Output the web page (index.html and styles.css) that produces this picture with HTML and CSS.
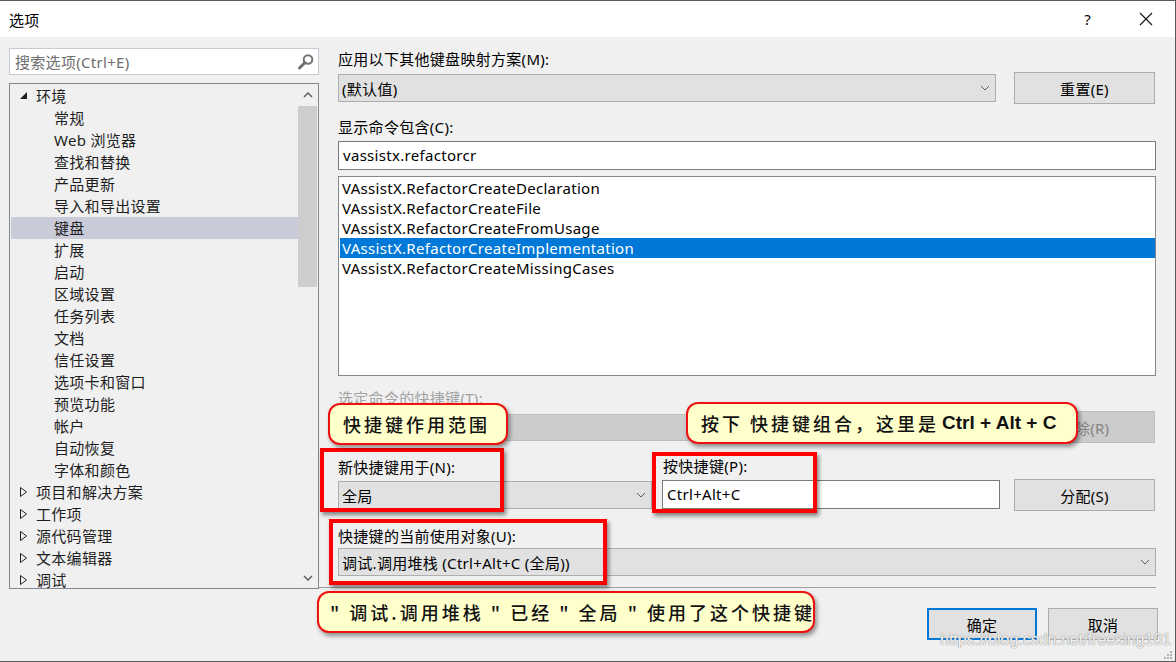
FILE: index.html
```html
<!DOCTYPE html>
<html>
  <head>
    <meta charset="utf-8">
    <title>选项</title>
    <link rel="stylesheet" href="styles.css">
  </head>
  <body>
    <div class="window">
      <!-- Titelleiste -->
      <div class="titlebar">
        <span class="title">选项</span>
        <span class="help">?</span>
        <svg class="close" width="14" height="14" viewBox="0 0 14 14">
          <path d="M1 1 L13 13 M13 1 L1 13" stroke="#111" stroke-width="1.1" fill="none"/>
        </svg>
      </div>

      <div class="main">
        <!-- linke Spalte: Suche + Baum -->
        <div class="left">
          <div class="search">
            <span class="placeholder">搜索选项(Ctrl+E)</span>
            <svg class="search-icon" width="18" height="18" viewBox="0 0 18 18">
              <circle cx="11" cy="6.5" r="4.3" stroke="#717171" stroke-width="2" fill="none"/>
              <path d="M8 9.5 L2.5 15" stroke="#717171" stroke-width="3" stroke-linecap="round"/>
            </svg>
          </div>

          <div class="tree">
            <ul class="tree-list">
              <li class="tree-item">
                <span class="twisty"><svg width="10" height="10" viewBox="0 0 10 10"><path d="M8 1 L8 8 L1 8 Z" fill="#1e1e1e"/></svg></span>环境
              </li>
              <li class="tree-item child">常规</li>
              <li class="tree-item child">Web 浏览器</li>
              <li class="tree-item child">查找和替换</li>
              <li class="tree-item child">产品更新</li>
              <li class="tree-item child">导入和导出设置</li>
              <li class="tree-item child selected">键盘</li>
              <li class="tree-item child">扩展</li>
              <li class="tree-item child">启动</li>
              <li class="tree-item child">区域设置</li>
              <li class="tree-item child">任务列表</li>
              <li class="tree-item child">文档</li>
              <li class="tree-item child">信任设置</li>
              <li class="tree-item child">选项卡和窗口</li>
              <li class="tree-item child">预览功能</li>
              <li class="tree-item child">帐户</li>
              <li class="tree-item child">自动恢复</li>
              <li class="tree-item child">字体和颜色</li>
              <li class="tree-item"><span class="twisty"><svg width="10" height="12" viewBox="0 0 10 12"><path d="M1.5 1.5 L7.5 6 L1.5 10.5 Z" stroke="#1e1e1e" fill="none"/></svg></span>项目和解决方案</li>
              <li class="tree-item"><span class="twisty"><svg width="10" height="12" viewBox="0 0 10 12"><path d="M1.5 1.5 L7.5 6 L1.5 10.5 Z" stroke="#1e1e1e" fill="none"/></svg></span>工作项</li>
              <li class="tree-item"><span class="twisty"><svg width="10" height="12" viewBox="0 0 10 12"><path d="M1.5 1.5 L7.5 6 L1.5 10.5 Z" stroke="#1e1e1e" fill="none"/></svg></span>源代码管理</li>
              <li class="tree-item"><span class="twisty"><svg width="10" height="12" viewBox="0 0 10 12"><path d="M1.5 1.5 L7.5 6 L1.5 10.5 Z" stroke="#1e1e1e" fill="none"/></svg></span>文本编辑器</li>
              <li class="tree-item"><span class="twisty"><svg width="10" height="12" viewBox="0 0 10 12"><path d="M1.5 1.5 L7.5 6 L1.5 10.5 Z" stroke="#1e1e1e" fill="none"/></svg></span>调试</li>
            </ul>
            <div class="vscroll">
              <div class="sb-btn"><svg width="10" height="6" viewBox="0 0 10 6"><path d="M1 5 L5 1 L9 5" stroke="#606060" stroke-width="1.5" fill="none"/></svg></div>
              <div class="sb-thumb"></div>
              <div class="sb-space"></div>
              <div class="sb-btn"><svg width="10" height="6" viewBox="0 0 10 6"><path d="M1 1 L5 5 L9 1" stroke="#606060" stroke-width="1.5" fill="none"/></svg></div>
            </div>
          </div>
        </div>

        <!-- rechte Spalte -->
        <div class="right">
          <div class="label">应用以下其他键盘映射方案(M):</div>
          <div class="row row-top">
            <div class="combo combo-wide">
              <span>(默认值)</span>
              <svg width="10" height="6" viewBox="0 0 10 6"><path d="M1 1 L5 5 L9 1" stroke="#606060" fill="none"/></svg>
            </div>
            <div class="btn">重置(E)</div>
          </div>

          <div class="label gap13">显示命令包含(C):</div>
          <div class="textbox tb-filter">vassistx.refactorcr</div>

          <ul class="cmdlist">
            <li>VAssistX.RefactorCreateDeclaration</li>
            <li>VAssistX.RefactorCreateFile</li>
            <li>VAssistX.RefactorCreateFromUsage</li>
            <li class="selected">VAssistX.RefactorCreateImplementation</li>
            <li>VAssistX.RefactorCreateMissingCases</li>
          </ul>

          <div class="label disabled gap12">选定命令的快捷键(T):</div>
          <div class="row row-disabled">
            <div class="combo combo-wide combo-off"></div>
            <div class="btn btn-off">删除(R)</div>
          </div>

          <div class="row row-new">
            <div class="field field-scope">
              <div class="label">新快捷键用于(N):</div>
              <div class="combo">
                <span>全局</span>
                <svg width="10" height="6" viewBox="0 0 10 6"><path d="M1 1 L5 5 L9 1" stroke="#606060" fill="none"/></svg>
              </div>
            </div>
            <div class="field field-keys">
              <div class="label">按快捷键(P):</div>
              <div class="textbox">Ctrl+Alt+C</div>
            </div>
            <div class="btn btn-assign">分配(S)</div>
          </div>

          <div class="label gap17">快捷键的当前使用对象(U):</div>
          <div class="combo combo-used">
            <span>调试.调用堆栈 (Ctrl+Alt+C (全局))</span>
            <svg width="10" height="6" viewBox="0 0 10 6"><path d="M1 1 L5 5 L9 1" stroke="#606060" fill="none"/></svg>
          </div>

          <div class="separator"></div>

          <div class="row row-ok">
            <div class="btn btn-small btn-default">确定</div>
            <div class="btn btn-small">取消</div>
          </div>
        </div>
      </div>

      <!-- Markierungen aus dem Screenshot -->
      <div class="mark mark-scope"></div>
      <div class="mark mark-keys"></div>
      <div class="mark mark-used"></div>

      <div class="callout callout-scope">快捷键作用范围</div>
      <div class="callout callout-keys">按下 快捷键组合，这里是 <b>Ctrl + Alt + C</b></div>
      <div class="callout callout-used">" 调试.调用堆栈 " 已经 " 全局 " 使用了这个快捷键</div>

      <div class="watermark">https://blog.csdn.net/freeking101</div>
      <svg class="grip" width="10" height="10" viewBox="0 0 10 10">
        <rect x="7" y="1" width="2" height="2" fill="#b5b5b5"/>
        <rect x="4" y="4" width="2" height="2" fill="#b5b5b5"/>
        <rect x="7" y="4" width="2" height="2" fill="#b5b5b5"/>
        <rect x="1" y="7" width="2" height="2" fill="#b5b5b5"/>
        <rect x="4" y="7" width="2" height="2" fill="#b5b5b5"/>
        <rect x="7" y="7" width="2" height="2" fill="#b5b5b5"/>
      </svg>
    </div>
  </body>
</html>
```

FILE: styles.css
```css
* {
  box-sizing: border-box;
}

body {
  margin: 0;
  font-family: "Noto Sans", "Noto Sans CJK SC", sans-serif;
  font-size: 15px;
  letter-spacing: 0.3px;
  color: #000;
}

.window {
  position: relative;
  width: 1176px;
  height: 662px;
  background: #f0f0f0;
  border: 1px solid #5a5a5a;
  border-left: none;
  overflow: hidden;
}

/* Titelleiste */
.titlebar {
  height: 36px;
  background: #fff;
  display: flex;
  align-items: center;
  padding-left: 9px;
}

.title {
  flex: 1;
}

.help {
  margin-right: 48px;
}

.close {
  margin-right: 22px;
}

.main {
  display: flex;
}

/* linke Spalte */
.left {
  width: 310px;
  margin-left: 9px;
  padding-top: 11px;
}

.search {
  height: 27px;
  background: #fff;
  border: 1px solid #c6cbd3;
  display: flex;
  align-items: center;
  justify-content: space-between;
  padding: 0 3px 0 5px;
}

.placeholder {
  color: #6d6d6d;
}

.tree {
  margin-top: 8px;
  height: 506px;
  border: 1px solid #828790;
  display: flex;
  overflow: hidden;
}

.tree-list {
  flex: 1;
  list-style: none;
  margin: 0;
  padding: 1px 0 0 1px;
}

.tree-item {
  height: 22px;
  line-height: 22px;
  display: flex;
  align-items: center;
  padding-left: 8px;
  color: #1e1e1e;
  white-space: nowrap;
}

.tree-item.child {
  padding-left: 43px;
}

.tree-item.selected {
  background: #cacbd8;
}

.twisty {
  width: 17px;
  display: flex;
  align-items: center;
}

.vscroll {
  width: 20px;
  display: flex;
  flex-direction: column;
}

.sb-btn {
  height: 21px;
  display: flex;
  align-items: center;
  justify-content: center;
}

.sb-thumb {
  margin-top: 1px;
  width: 19px;
  height: 181px;
  background: #cdcdcd;
}

.sb-space {
  flex: 1;
}

/* rechte Spalte */
.right {
  width: 818px;
  margin-left: 19px;
  padding-top: 12px;
}

.label {
  height: 20px;
  line-height: 20px;
  white-space: nowrap;
}

.label.disabled {
  color: #a2a2a2;
}

.gap12 { margin-top: 12px; }
.gap13 { margin-top: 13px; }
.gap17 { margin-top: 17px; }

.row {
  display: flex;
  align-items: center;
}

.row-top {
  margin-top: 3px;
  height: 32px;
  gap: 18px;
}

.combo {
  height: 28px;
  background: #e1e1e1;
  border: 1px solid #adadad;
  display: flex;
  align-items: center;
  justify-content: space-between;
  padding: 0 5px 0 3px;
  white-space: nowrap;
}

.combo-wide {
  width: 658px;
}

.btn {
  width: 141px;
  height: 32px;
  background: #e1e1e1;
  border: 1px solid #adadad;
  display: flex;
  align-items: center;
  justify-content: center;
}

.textbox {
  height: 29px;
  line-height: 27px;
  background: #fff;
  border: 1px solid #7a7a7a;
  padding-left: 4px;
}

.tb-filter {
  margin-top: 4px;
}

.cmdlist {
  list-style: none;
  margin: 6px 0 0 0;
  height: 200px;
  background: #fff;
  border: 1px solid #828790;
  padding: 1px 0 0 1px;
}

.cmdlist li {
  height: 20px;
  line-height: 20px;
  padding-left: 2px;
}

.cmdlist li.selected {
  background: #0078d7;
  color: #fff;
}

.row-disabled {
  margin-top: 3px;
  height: 32px;
  gap: 18px;
}

.combo-off {
  height: 27px;
  background: #cccccc;
  border-color: #bfbfbf;
}

.btn-off {
  background: #cccccc;
  border-color: #bfbfbf;
  color: #838383;
}

.row-new {
  margin-top: 13px;
  align-items: flex-end;
}

.field-scope {
  width: 314px;
}

.field-scope .combo {
  margin-top: 4px;
}

.field-keys {
  width: 338px;
  margin-left: 10px;
}

.field-keys .label {
  padding-left: 1px;
}

.field-keys .textbox {
  margin-top: 4px;
}

.btn-assign {
  margin-left: 14px;
  margin-bottom: -2px;
}

.combo-used {
  margin-top: 2px;
}

.separator {
  margin-top: 11px;
  margin-left: -19px;
  height: 1px;
  background: #a0a0a0;
}

.row-ok {
  margin-top: 20px;
  justify-content: flex-end;
  gap: 11px;
  margin-right: -2px;
}

.btn-small {
  width: 110px;
}

.btn-default {
  border: 2px solid #0078d7;
}

/* rote Rahmen und Sprechblasen liegen über dem Dialog */
.mark {
  position: absolute;
  border: 4px solid #ff0000;
  box-shadow: 2px 3px 4px rgba(0, 0, 0, 0.45);
}

.mark-scope {
  left: 320px;
  top: 447px;
  width: 184px;
  height: 64px;
}

.mark-keys {
  left: 652px;
  top: 451px;
  width: 165px;
  height: 61px;
}

.mark-used {
  left: 329px;
  top: 518px;
  width: 278px;
  height: 66px;
}

.callout {
  position: absolute;
  height: 42px;
  background: #ffffcc;
  border: 2px solid #ee1111;
  border-radius: 12px;
  box-shadow: 2px 3px 4px rgba(0, 0, 0, 0.4);
  display: flex;
  align-items: center;
  padding-left: 13px;
  font-family: "Noto Sans CJK SC", sans-serif;
  font-size: 18px;
  font-weight: 500;
  letter-spacing: 3px;
  color: #111;
  white-space: nowrap;
}

.callout b {
  font-family: "Liberation Sans", sans-serif;
  font-weight: bold;
  letter-spacing: 0;
  font-size: 19px;
  margin-left: 3px;
}

.callout-scope {
  left: 328px;
  top: 402px;
  width: 180px;
}

.callout-keys {
  left: 686px;
  top: 401px;
  width: 392px;
}

.callout-used {
  left: 317px;
  top: 590px;
  width: 498px;
  padding-left: 11px;
}

.watermark {
  position: absolute;
  left: 940px;
  top: 630px;
  font-family: "Liberation Sans", sans-serif;
  font-size: 16px;
  letter-spacing: 0;
  white-space: nowrap;
  color: rgba(255, 255, 255, 0.9);
  text-shadow: 0 0 1px #8a8a8a, 0 0 1px #8a8a8a;
}

.grip {
  position: absolute;
  right: 2px;
  bottom: 1px;
}
```
